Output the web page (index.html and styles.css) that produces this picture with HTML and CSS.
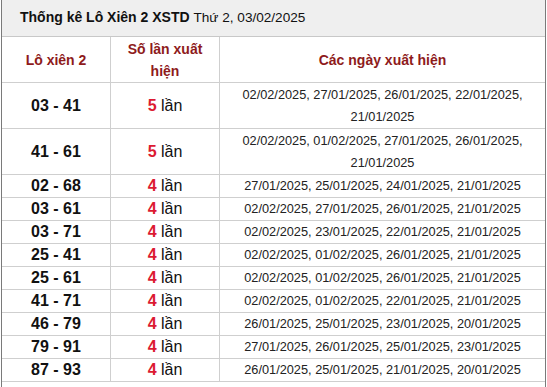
FILE: index.html
```html
<!DOCTYPE html>
<html lang="vi">
<head>
<meta charset="utf-8">
<link rel="stylesheet" href="styles.css">
</head>
<body>
<div class="box">
  <div class="title"><b>Thống kê Lô Xiên 2 XSTD</b> <span class="day">Thứ 2, 03/02/2025</span></div>
  <table class="stats">
    <thead>
      <tr>
        <th class="c1">Lô xiên 2</th>
        <th class="c2">Số lần xuất<br>hiện</th>
        <th class="c3">Các ngày xuất hiện</th>
      </tr>
    </thead>
    <tbody>
      <tr class="tall"><td class="pair">03 - 41</td><td class="count"><span class="num">5</span> lần</td><td class="dates">02/02/2025, 27/01/2025, 26/01/2025, 22/01/2025,<br>21/01/2025</td></tr>
      <tr class="tall"><td class="pair">41 - 61</td><td class="count"><span class="num">5</span> lần</td><td class="dates">02/02/2025, 01/02/2025, 27/01/2025, 26/01/2025,<br>21/01/2025</td></tr>
      <tr><td class="pair">02 - 68</td><td class="count"><span class="num">4</span> lần</td><td class="dates">27/01/2025, 25/01/2025, 24/01/2025, 21/01/2025</td></tr>
      <tr><td class="pair">03 - 61</td><td class="count"><span class="num">4</span> lần</td><td class="dates">02/02/2025, 27/01/2025, 26/01/2025, 21/01/2025</td></tr>
      <tr><td class="pair">03 - 71</td><td class="count"><span class="num">4</span> lần</td><td class="dates">02/02/2025, 23/01/2025, 22/01/2025, 21/01/2025</td></tr>
      <tr><td class="pair">25 - 41</td><td class="count"><span class="num">4</span> lần</td><td class="dates">02/02/2025, 01/02/2025, 26/01/2025, 21/01/2025</td></tr>
      <tr><td class="pair">25 - 61</td><td class="count"><span class="num">4</span> lần</td><td class="dates">02/02/2025, 01/02/2025, 26/01/2025, 21/01/2025</td></tr>
      <tr><td class="pair">41 - 71</td><td class="count"><span class="num">4</span> lần</td><td class="dates">02/02/2025, 01/02/2025, 22/01/2025, 21/01/2025</td></tr>
      <tr><td class="pair">46 - 79</td><td class="count"><span class="num">4</span> lần</td><td class="dates">26/01/2025, 25/01/2025, 23/01/2025, 20/01/2025</td></tr>
      <tr><td class="pair">79 - 91</td><td class="count"><span class="num">4</span> lần</td><td class="dates">27/01/2025, 26/01/2025, 25/01/2025, 23/01/2025</td></tr>
      <tr><td class="pair">87 - 93</td><td class="count"><span class="num">4</span> lần</td><td class="dates">26/01/2025, 25/01/2025, 21/01/2025, 20/01/2025</td></tr>
    </tbody>
  </table>
</div>
</body>
</html>
```

FILE: styles.css
```css
html, body {
  margin: 0;
  padding: 0;
  background: #fff;
}
body {
  font-family: "Liberation Sans", Arial, sans-serif;
  color: #111;
}
.box {
  margin-left: 1px;
  width: 543px;
  border-left: 1px solid #7a7a7a;
  border-right: 1px solid #7a7a7a;
  min-height: 387px;
}
.title {
  height: 36px;
  line-height: 35px;
  background: #efefef;
  border-bottom: 1px solid #c8c8c8;
  padding-left: 18px;
  font-size: 14px;
  color: #111;
}
.title b {
  font-weight: bold;
}
.title .day {
  font-size: 13.6px;
}
.stats {
  width: 100%;
  border-collapse: collapse;
  table-layout: fixed;
}
.stats th,
.stats td {
  border: 1px solid #cfcfcf;
  padding: 0;
  text-align: center;
  vertical-align: middle;
}
.stats tr > :first-child { border-left: none; }
.stats tr > :last-child { border-right: none; }
.stats thead tr > * { border-top: none; }
.c1 { width: 108px; }
.c2 { width: 108px; }
.stats th {
  height: 45px;
  font-size: 14px;
  font-weight: bold;
  color: #8e1b1b;
  line-height: 22px;
}
.stats td {
  height: 22px;
  line-height: 22px;
}
.stats tr.tall td {
  height: 45px;
}
.pair {
  font-size: 16px;
  font-weight: bold;
  color: #111;
}
.count {
  font-size: 16px;
  color: #111;
}
.num {
  font-weight: bold;
  color: #dc1a32;
}
.dates {
  font-size: 12.75px;
  color: #222;
}
```
